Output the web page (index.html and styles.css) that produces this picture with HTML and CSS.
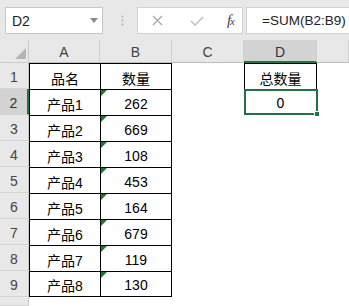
FILE: index.html
```html
<!DOCTYPE html>
<html lang="zh-CN">
<head>
    <meta charset="UTF-8">
    <meta name="viewport" content="width=device-width, initial-scale=1.0">
    <title>总数量</title>
    <link rel="stylesheet" href="styles.css">
</head>
<body>
    <div class="toolbar">
        <div class="namebox">
            <span>D2</span>
            <svg class="arrow" width="8" height="5" viewBox="0 0 8 5"><polygon points="0,0 8,0 4,5" fill="#8a8a8a"/></svg>
        </div>
        <div class="grip">
            <svg width="3" height="11" viewBox="0 0 3 11"><circle cx="1.5" cy="1.5" r="1" fill="#b0b0b0"/><circle cx="1.5" cy="5.5" r="1" fill="#b0b0b0"/><circle cx="1.5" cy="9.5" r="1" fill="#b0b0b0"/></svg>
        </div>
        <div class="fxbox">
            <svg class="icon" width="11" height="11" viewBox="0 0 11 11"><path d="M1 1 L10 10 M10 1 L1 10" stroke="#a8a8a8" stroke-width="1.3" fill="none"/></svg>
            <svg class="icon" width="14" height="10" viewBox="0 0 14 10"><path d="M1 5 L5 9 L13 1" stroke="#c0c0c0" stroke-width="1.5" fill="none"/></svg>
            <span class="fx">f<small>x</small></span>
        </div>
        <div class="formula">=SUM(B2:B9)</div>
    </div>

    <div class="sheet">
        <div class="corner">
            <svg width="29" height="23" viewBox="0 0 29 23"><polygon points="26,8 26,19 15,19" fill="#b5b5b5"/></svg>
        </div>
        <div class="ch">A</div>
        <div class="ch">B</div>
        <div class="ch">C</div>
        <div class="ch on">D</div>
        <div class="ch"></div>

        <div class="rh">1</div>
        <div class="c a">品名</div>
        <div class="c b">数量</div>
        <div class="c"></div>
        <div class="c d">总数量</div>
        <div class="c"></div>

        <div class="rh on">2</div>
        <div class="c a">产品1</div>
        <div class="c b"><i class="tri"></i>262</div>
        <div class="c"></div>
        <div class="c d sel">0<span class="selbox"></span><span class="handle"></span></div>
        <div class="c"></div>

        <div class="rh">3</div>
        <div class="c a">产品2</div>
        <div class="c b"><i class="tri"></i>669</div>
        <div class="c"></div>
        <div class="c"></div>
        <div class="c"></div>

        <div class="rh">4</div>
        <div class="c a">产品3</div>
        <div class="c b"><i class="tri"></i>108</div>
        <div class="c"></div>
        <div class="c"></div>
        <div class="c"></div>

        <div class="rh">5</div>
        <div class="c a">产品4</div>
        <div class="c b"><i class="tri"></i>453</div>
        <div class="c"></div>
        <div class="c"></div>
        <div class="c"></div>

        <div class="rh">6</div>
        <div class="c a">产品5</div>
        <div class="c b"><i class="tri"></i>164</div>
        <div class="c"></div>
        <div class="c"></div>
        <div class="c"></div>

        <div class="rh">7</div>
        <div class="c a">产品6</div>
        <div class="c b"><i class="tri"></i>679</div>
        <div class="c"></div>
        <div class="c"></div>
        <div class="c"></div>

        <div class="rh">8</div>
        <div class="c a">产品7</div>
        <div class="c b"><i class="tri"></i>119</div>
        <div class="c"></div>
        <div class="c"></div>
        <div class="c"></div>

        <div class="rh">9</div>
        <div class="c a last">产品8</div>
        <div class="c b last"><i class="tri"></i>130</div>
        <div class="c"></div>
        <div class="c"></div>
        <div class="c"></div>

        <div class="rh"></div>
        <div class="c"></div>
        <div class="c"></div>
        <div class="c"></div>
        <div class="c"></div>
        <div class="c"></div>
    </div>
</body>
</html>
```

FILE: styles.css
```css
* {
    box-sizing: border-box;
}
body {
    margin: 0;
    width: 349px;
    height: 306px;
    overflow: hidden;
    background: #fff;
    font-family: 'Liberation Sans', 'Noto Sans CJK SC', sans-serif;
    color: #000;
}
.toolbar {
    height: 40px;
    background: #e8e8e8;
    display: flex;
    align-items: flex-start;
    padding: 7px 0 0 5px;
}
.namebox {
    width: 98px;
    height: 27px;
    background: #fff;
    border: 1px solid #c6c6c6;
    display: flex;
    align-items: center;
    justify-content: space-between;
    padding: 0 4px 0 6px;
    font-size: 14px;
    color: #222;
}
.namebox .arrow {
    margin-top: -1px;
}
.grip {
    width: 34px;
    height: 27px;
    display: flex;
    align-items: center;
    justify-content: center;
    padding-left: 4px;
}
.fxbox {
    width: 106px;
    height: 27px;
    background: #fff;
    border: 1px solid #d0d0d0;
    display: flex;
    align-items: center;
    padding: 0 8px 0 14px;
    justify-content: space-between;
}
.fxbox .icon:nth-child(2) {
    margin-left: 4px;
}
.fx {
    font-family: 'Liberation Serif', serif;
    font-style: italic;
    font-size: 15px;
    color: #444;
    letter-spacing: -1px;
}
.fx small {
    font-size: 11px;
}
.formula {
    flex: 1;
    height: 27px;
    margin-left: 3px;
    background: #fff;
    border: 1px solid #d0d0d0;
    border-right: none;
    display: flex;
    align-items: center;
    padding-left: 15px;
    font-size: 13.5px;
    color: #222;
}
.sheet {
    display: grid;
    grid-template-columns: 29px 71px 72px 72px 73px 32px;
    grid-template-rows: 23px repeat(9, 26px) 9px;
}
.corner {
    background: #e8e8e8;
    border-right: 1px solid #c9c9c9;
    border-bottom: 1px solid #c9c9c9;
}
.corner svg {
    display: block;
}
.ch {
    background: #e8e8e8;
    border-right: 1px solid #cfcfcf;
    border-bottom: 1px solid #bdbdbd;
    display: flex;
    align-items: center;
    justify-content: center;
    font-size: 14px;
    color: #444;
    padding-top: 2px;
}
.ch.on {
    background: #d3d3d3;
    border-bottom: 2px solid #217346;
    color: #333;
}
.rh {
    background: #e8e8e8;
    border-right: 1px solid #c9c9c9;
    border-bottom: 1px solid #d6d6d6;
    display: flex;
    align-items: center;
    justify-content: center;
    font-size: 14px;
    color: #444;
    padding-top: 3px;
}
.rh.on {
    background: #d3d3d3;
    border-right: 2px solid #217346;
    color: #333;
}
.c {
    position: relative;
    display: flex;
    align-items: center;
    justify-content: center;
    font-size: 14px;
    padding-top: 2px;
}
.c.a {
    border-left: 1px solid #000;
    border-top: 1px solid #000;
}
.c.b {
    border-left: 1px solid #000;
    border-right: 1px solid #000;
    border-top: 1px solid #000;
}
.c.last {
    border-bottom: 1px solid #000;
}
.c.d {
    border-left: 1px solid #000;
    border-right: 1px solid #000;
    border-top: 1px solid #000;
}
.c.sel {
    border-bottom: 1px solid #000;
}
.tri {
    position: absolute;
    top: 0;
    left: 0;
    width: 0;
    height: 0;
    border-top: 6px solid #1d7a2c;
    border-right: 6px solid transparent;
}
.selbox {
    position: absolute;
    top: -1px;
    left: -1px;
    right: -2px;
    bottom: -1px;
    border: 2px solid #217346;
}
.handle {
    position: absolute;
    right: -4px;
    bottom: -3px;
    width: 6px;
    height: 6px;
    background: #217346;
    border: 1px solid #fff;
}
```
